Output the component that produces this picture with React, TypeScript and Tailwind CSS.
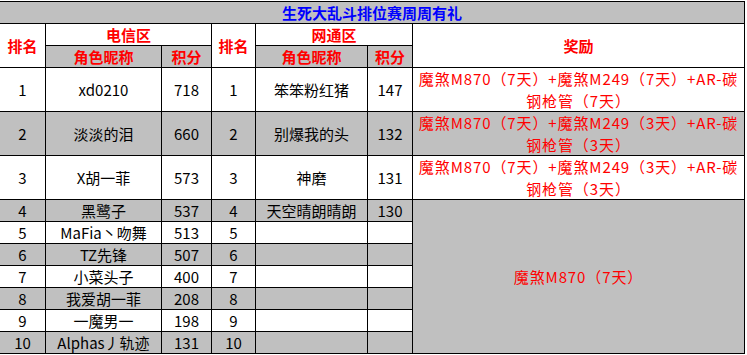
const left = [
  ["1", "xd0210", "718"],
  ["2", "淡淡的泪", "660"],
  ["3", "X胡一菲", "573"],
  ["4", "黑鹭子", "537"],
  ["5", "MaFia丶吻舞", "513"],
  ["6", "TZ先锋", "507"],
  ["7", "小菜头子", "400"],
  ["8", "我爱胡一菲", "208"],
  ["9", "一魔男一", "198"],
  ["10", "Alphas丿轨迹", "131"],
];

const right = [
  ["1", "笨笨粉红猪", "147"],
  ["2", "别爆我的头", "132"],
  ["3", "神磨", "131"],
  ["4", "天空晴朗晴朗", "130"],
  ["5", "", ""],
  ["6", "", ""],
  ["7", "", ""],
  ["8", "", ""],
  ["9", "", ""],
  ["10", "", ""],
];

const rewards = [
  ["魔煞M870（7天）+魔煞M249（7天）+AR-碳", "钢枪管（7天）"],
  ["魔煞M870（7天）+魔煞M249（3天）+AR-碳", "钢枪管（3天）"],
  ["魔煞M870（7天）+魔煞M249（3天）+AR-碳", "钢枪管（3天）"],
];

function Cell({
  gray,
  className = "",
  children,
}: {
  gray?: boolean;
  className?: string;
  children?: React.ReactNode;
}) {
  return (
    <div
      className={`flex items-center justify-center whitespace-nowrap ${
        gray ? "bg-[#c0c0c0]" : "bg-white"
      } ${className}`}
    >
      {children}
    </div>
  );
}

function Head({ gray, className = "", children }: { gray?: boolean; className?: string; children: React.ReactNode }) {
  return (
    <Cell gray={gray} className={`font-bold text-[#ff0000] ${className}`}>
      {children}
    </Cell>
  );
}

export default function App() {
  return (
    <div className="min-h-screen bg-white pt-px font-['Noto_Sans_CJK_SC',sans-serif] text-[15px] leading-none text-black">
      <div className="grid w-[745px] grid-cols-[45px_115px_49px_43px_111px_44px_331px] grid-rows-[21px_21px_21px_43px_43px_43px_repeat(7,21px)] gap-px bg-black py-px pr-px">
        <Cell gray className="col-span-7 font-bold text-[#0000ff]">
          生死大乱斗排位赛周周有礼
        </Cell>

        <Head className="row-span-2">排名</Head>
        <Head className="col-span-2">电信区</Head>
        <Head className="row-span-2">排名</Head>
        <Head className="col-span-2">网通区</Head>
        <Head className="row-span-2">奖励</Head>
        <Head gray>角色昵称</Head>
        <Head gray>积分</Head>
        <Head gray>角色昵称</Head>
        <Head gray>积分</Head>

        {left.map((l, i) => {
          const gray = i % 2 === 1;
          const r = right[i];
          return [
            <Cell key={`a${i}`} gray={gray}>{l[0]}</Cell>,
            <Cell key={`b${i}`} gray={gray}>{l[1]}</Cell>,
            <Cell key={`c${i}`} gray={gray}>{l[2]}</Cell>,
            <Cell key={`d${i}`} gray={gray}>{r[0]}</Cell>,
            <Cell key={`e${i}`} gray={gray}>{r[1]}</Cell>,
            <Cell key={`f${i}`} gray={gray}>{r[2]}</Cell>,
            i < 3 ? (
              <Cell key={`g${i}`} gray={gray} className="flex-col leading-[22px] tracking-[0.9px] text-[#ff0000]">
                <span>{rewards[i][0]}</span>
                <span>{rewards[i][1]}</span>
              </Cell>
            ) : i === 3 ? (
              <Cell key="g3" gray className="row-span-7 tracking-[0.9px] text-[#ff0000]">
                魔煞M870（7天）
              </Cell>
            ) : null,
          ];
        })}
      </div>
    </div>
  );
}
